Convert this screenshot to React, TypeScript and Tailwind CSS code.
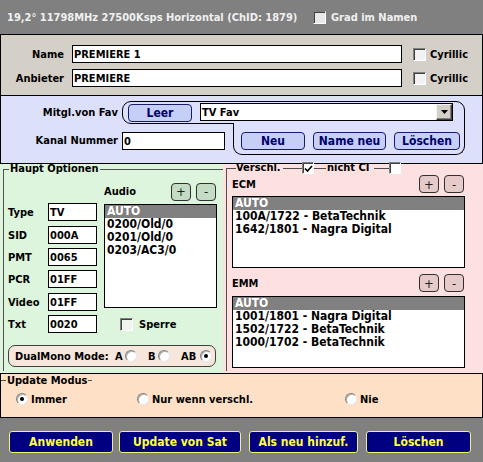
import React from "react";

function Check({ checked = false, size = 13, className = "" }: { checked?: boolean; size?: number; className?: string }) {
  return (
    <span
      className={`relative inline-flex items-center justify-center shrink-0 border border-t-[#808080] border-l-[#808080] border-r-white border-b-white shadow-[inset_1px_1px_0_#404040] ${className}`}
      style={{ width: size, height: size }}
    >
      {checked && (
        <svg width="9" height="8" viewBox="0 0 9 8" className="ml-px mt-px">
          <path d="M1 3.5 L3.5 6 L8 1" stroke="#000" strokeWidth="1.7" fill="none" />
        </svg>
      )}
    </span>
  );
}

function Radio({ checked = false }: { checked?: boolean }) {
  return (
    <span className="relative inline-flex items-center justify-center shrink-0 w-[12px] h-[12px] rounded-full bg-white border border-t-[#808080] border-l-[#808080] border-r-[#e8e8e8] border-b-[#e8e8e8] shadow-[inset_1px_1px_0_#b0b0b0]">
      {checked && <span className="w-[4px] h-[4px] rounded-full bg-black" />}
    </span>
  );
}

function ListBox({ items, className = "" }: { items: string[]; className?: string }) {
  return (
    <div className={`bg-white border border-black overflow-hidden ${className}`}>
      {items.map((t, i) => (
        <div
          key={i}
          className={`h-[13px] leading-[13px] pl-[2px] text-[12px] whitespace-nowrap ${i === 0 ? "bg-[#808080] text-white" : "text-black"}`}
        >
          {t}
        </div>
      ))}
    </div>
  );
}

function PlusMinus({ tone }: { tone: string }) {
  const cls = `w-[20px] h-[18px] rounded-[4px] border border-[#303030] flex items-center justify-center text-[13px] font-normal text-[#202020] ${tone}`;
  return (
    <div className="flex gap-[5px] ml-auto">
      <div className={cls}>+</div>
      <div className={cls}>-</div>
    </div>
  );
}

function Line({ w }: { w?: string }) {
  return <span className={`h-px bg-[#505050] shrink-0 ${w ?? "flex-1"}`} />;
}

export default function App() {
  const fields: [string, string, string][] = [
    ["Type", "TV", "mt-0"],
    ["SID", "000A", "mt-[5px]"],
    ["PMT", "0065", "mt-[4px]"],
    ["PCR", "01FF", "mt-[4px]"],
    ["Video", "01FF", "mt-[5px]"],
    ["Txt", "0020", "mt-[4px]"],
  ];
  const favBtn =
    "h-[18px] rounded-[4px] border border-[#1a1a6a] bg-[#c6cff5] text-[#00006a] text-[12px] flex items-center justify-center";
  const bottomBtn =
    "h-[22px] bg-[#000080] border border-[#f2f27a] rounded-[3px] text-[#ffff3c] text-[12px] flex items-center justify-center shrink-0";

  return (
    <div className="w-[483px] h-[462px] overflow-hidden bg-[#808080] flex flex-col text-[11px] leading-none text-black font-bold font-['DejaVu_Sans_Condensed','Liberation_Sans',sans-serif]">
      {/* Header */}
      <div className="h-[34px] shrink-0 flex items-center pl-[7px] text-[#f0f0f0] text-[11px]">
        <span className="inline-block w-[306px] whitespace-nowrap">19,2° 11798MHz 27500Ksps Horizontal (ChID: 1879)</span>
        <Check className="bg-[#e8e8e8]" size={13} />
        <span className="ml-[5px]">Grad im Namen</span>
      </div>

      {/* Name / Anbieter */}
      <div className="h-[62px] shrink-0 bg-[#d4d0c8] border border-black pt-[10px] flex flex-col gap-[6px]">
        {[
          ["Name", "PREMIERE 1"],
          ["Anbieter", "PREMIERE"],
        ].map(([l, v]) => (
          <div key={l} className="flex items-center h-[18px]">
            <span className="w-[63px] text-right">{l}</span>
            <div className="ml-[8px] w-[330px] h-[18px] bg-white border border-black flex items-center pl-[1px]">{v}</div>
            <Check className="ml-[11px] bg-[#f2f2f2]" />
            <span className="ml-[4px]">Cyrillic</span>
          </div>
        ))}
      </div>

      {/* Favourites */}
      <div className="h-[68px] shrink-0 bg-[#dde0fb] border-x border-b border-black pt-[5px] flex flex-col">
        <div className="flex h-[23px]">
          <span className="w-[117px] text-right leading-[23px]">Mitgl.von Fav</span>
          <div className="ml-[4px] w-[343px] h-[23px] border border-black rounded-tl-[9px] rounded-tr-[9px] rounded-bl-[9px] flex items-start pl-[5px] pt-[2px]">
            <div className={`w-[64px] h-[17px] ${favBtn}`}>Leer</div>
            <div className="ml-[8px] -mt-px w-[253px] h-[18px] bg-white border border-black flex items-center pl-[1px]">
              <span>TV Fav</span>
              <div className="ml-auto w-[16px] h-[16px] bg-[#d4d0c8] border border-t-[#f4f4f4] border-l-[#f4f4f4] border-r-[#404040] border-b-[#404040] shadow-[inset_-1px_-1px_0_#808080] flex items-center justify-center">
                <svg width="7" height="4" viewBox="0 0 7 4">
                  <path d="M0 0h7L3.5 4z" fill="#000" />
                </svg>
              </div>
            </div>
          </div>
        </div>
        <div className="flex -mt-px">
          <span className="w-[117px] text-right mt-[9px] h-[18px] leading-[18px]">Kanal Nummer</span>
          <div className="ml-[4px] mt-[9px] w-[103px] h-[18px] bg-white border border-black pl-[1px] flex items-center">0</div>
          <div className="relative ml-[8px] w-[232px] h-[32px] bg-[#dde0fb] border-x border-b border-black rounded-b-[9px] flex items-start gap-[8px] pl-[7px] pt-[9px]">
            <div className={`w-[64px] ${favBtn}`}>Neu</div>
            <div className={`w-[73px] ${favBtn}`}>Name neu</div>
            <div className={`w-[66px] ${favBtn}`}>Löschen</div>
          </div>
        </div>
      </div>

      {/* Middle */}
      <div className="h-[209px] shrink-0 flex">
        {/* Haupt Optionen */}
        <div className="w-[223px] shrink-0 bg-[#dcf5dc] pl-[3px] pt-[5px]">
          <div className="w-[220px] h-[202px] border-l border-[#505050] flex flex-col">
            <div className="-mt-[7px] h-[14px] flex items-center">
              <Line w="w-[5px]" />
              <span className="px-[1px] leading-[14px]">Haupt Optionen</span>
              <Line />
            </div>
            <div className="mt-[7px] flex pl-[4px]">
              <div className="w-[89px] mt-[20px] flex flex-col">
                {fields.map(([l, v, m]) => (
                  <div key={l} className={`flex items-center h-[18px] ${m}`}>
                    <span className="w-[40px]">{l}</span>
                    <div className="w-[49px] h-[18px] bg-white border border-black pl-[1px] flex items-center">{v}</div>
                  </div>
                ))}
              </div>
              <div className="ml-[7px] w-[113px] flex flex-col">
                <div className="h-[17px] flex items-center pr-px">
                  <span>Audio</span>
                  <PlusMinus tone="bg-[#c4dcc4]" />
                </div>
                <ListBox className="mt-[4px] h-[104px]" items={["AUTO", "0200/Old/0", "0201/Old/0", "0203/AC3/0"]} />
                <div className="mt-[10px] h-[13px] flex items-center pl-[16px]">
                  <Check className="bg-[#eef4ee]" />
                  <span className="ml-[6px]">Sperre</span>
                </div>
              </div>
            </div>
            <div className="mt-[12px] ml-[4px] w-[208px] h-[22px] rounded-[7px] border border-[#404040] bg-[#f6e6dc] flex items-center pl-[6px]">
              <span className="w-[100px] whitespace-nowrap">DualMono Mode:</span>
              <span className="w-[10px]">A</span>
              <Radio />
              <span className="w-[11px]" />
              <span className="w-[10px]">B</span>
              <Radio />
              <span className="w-[11px]" />
              <span className="w-[19px]">AB</span>
              <Radio checked />
            </div>
          </div>
        </div>

        {/* Verschl. */}
        <div className="flex-1 bg-[#fde1e1] pl-[3px] pt-[4px]">
          <div className="h-[203px] border-l border-[#505050] flex flex-col">
            <div className="-mt-[7px] h-[14px] flex items-center">
              <Line w="w-[9px]" />
              <span className="w-[47px] leading-[14px] whitespace-nowrap">Verschl.</span>
              <Line w="w-[19px]" />
              <Check checked size={12} className="bg-white" />
              <Line w="w-[12px]" />
              <span className="w-[48px] pl-px leading-[14px] whitespace-nowrap">nicht CI</span>
              <Line w="w-[15px]" />
              <Check size={12} className="bg-white" />
            </div>
            <div className="pl-[5px] flex flex-col">
              <div className="w-[232px] h-[18px] flex items-center">
                <span>ECM</span>
                <PlusMinus tone="bg-[#e6caca]" />
              </div>
              <ListBox
                className="mt-[3px] w-[233px] h-[72px]"
                items={["AUTO", "100A/1722 - BetaTechnik", "1642/1801 - Nagra Digital"]}
              />
              <div className="mt-[6px] w-[232px] h-[18px] flex items-center">
                <span>EMM</span>
                <PlusMinus tone="bg-[#e6caca]" />
              </div>
              <ListBox
                className="mt-[4px] w-[233px] h-[72px]"
                items={["AUTO", "1001/1801 - Nagra Digital", "1502/1722 - BetaTechnik", "1000/1702 - BetaTechnik"]}
              />
            </div>
          </div>
        </div>
      </div>

      {/* Update Modus */}
      <div className="h-[45px] shrink-0 bg-[#fde0c6] border border-black flex flex-col">
        <div className="h-[12px] flex items-center">
          <Line w="w-[5px]" />
          <span className="px-[1px]">Update Modus</span>
          <Line w="w-[4px]" />
        </div>
        <div className="mt-[7px] h-[12px] flex items-center pl-[15px]">
          <div className="w-[121px] flex items-center">
            <Radio checked />
            <span className="ml-[3px]">Immer</span>
          </div>
          <div className="w-[208px] flex items-center">
            <Radio />
            <span className="ml-[3px]">Nur wenn verschl.</span>
          </div>
          <div className="flex items-center">
            <Radio />
            <span className="ml-[3px]">Nie</span>
          </div>
        </div>
      </div>

      {/* Bottom buttons */}
      <div className="flex-1 flex items-start pt-[13px] pl-[9px]">
        <div className={`w-[104px] ${bottomBtn}`}>Anwenden</div>
        <div className={`ml-[6px] w-[122px] ${bottomBtn}`}>Update von Sat</div>
        <div className={`ml-[8px] w-[109px] ${bottomBtn}`}>Als neu hinzuf.</div>
        <div className={`ml-[8px] w-[105px] ${bottomBtn}`}>Löschen</div>
      </div>
    </div>
  );
}
